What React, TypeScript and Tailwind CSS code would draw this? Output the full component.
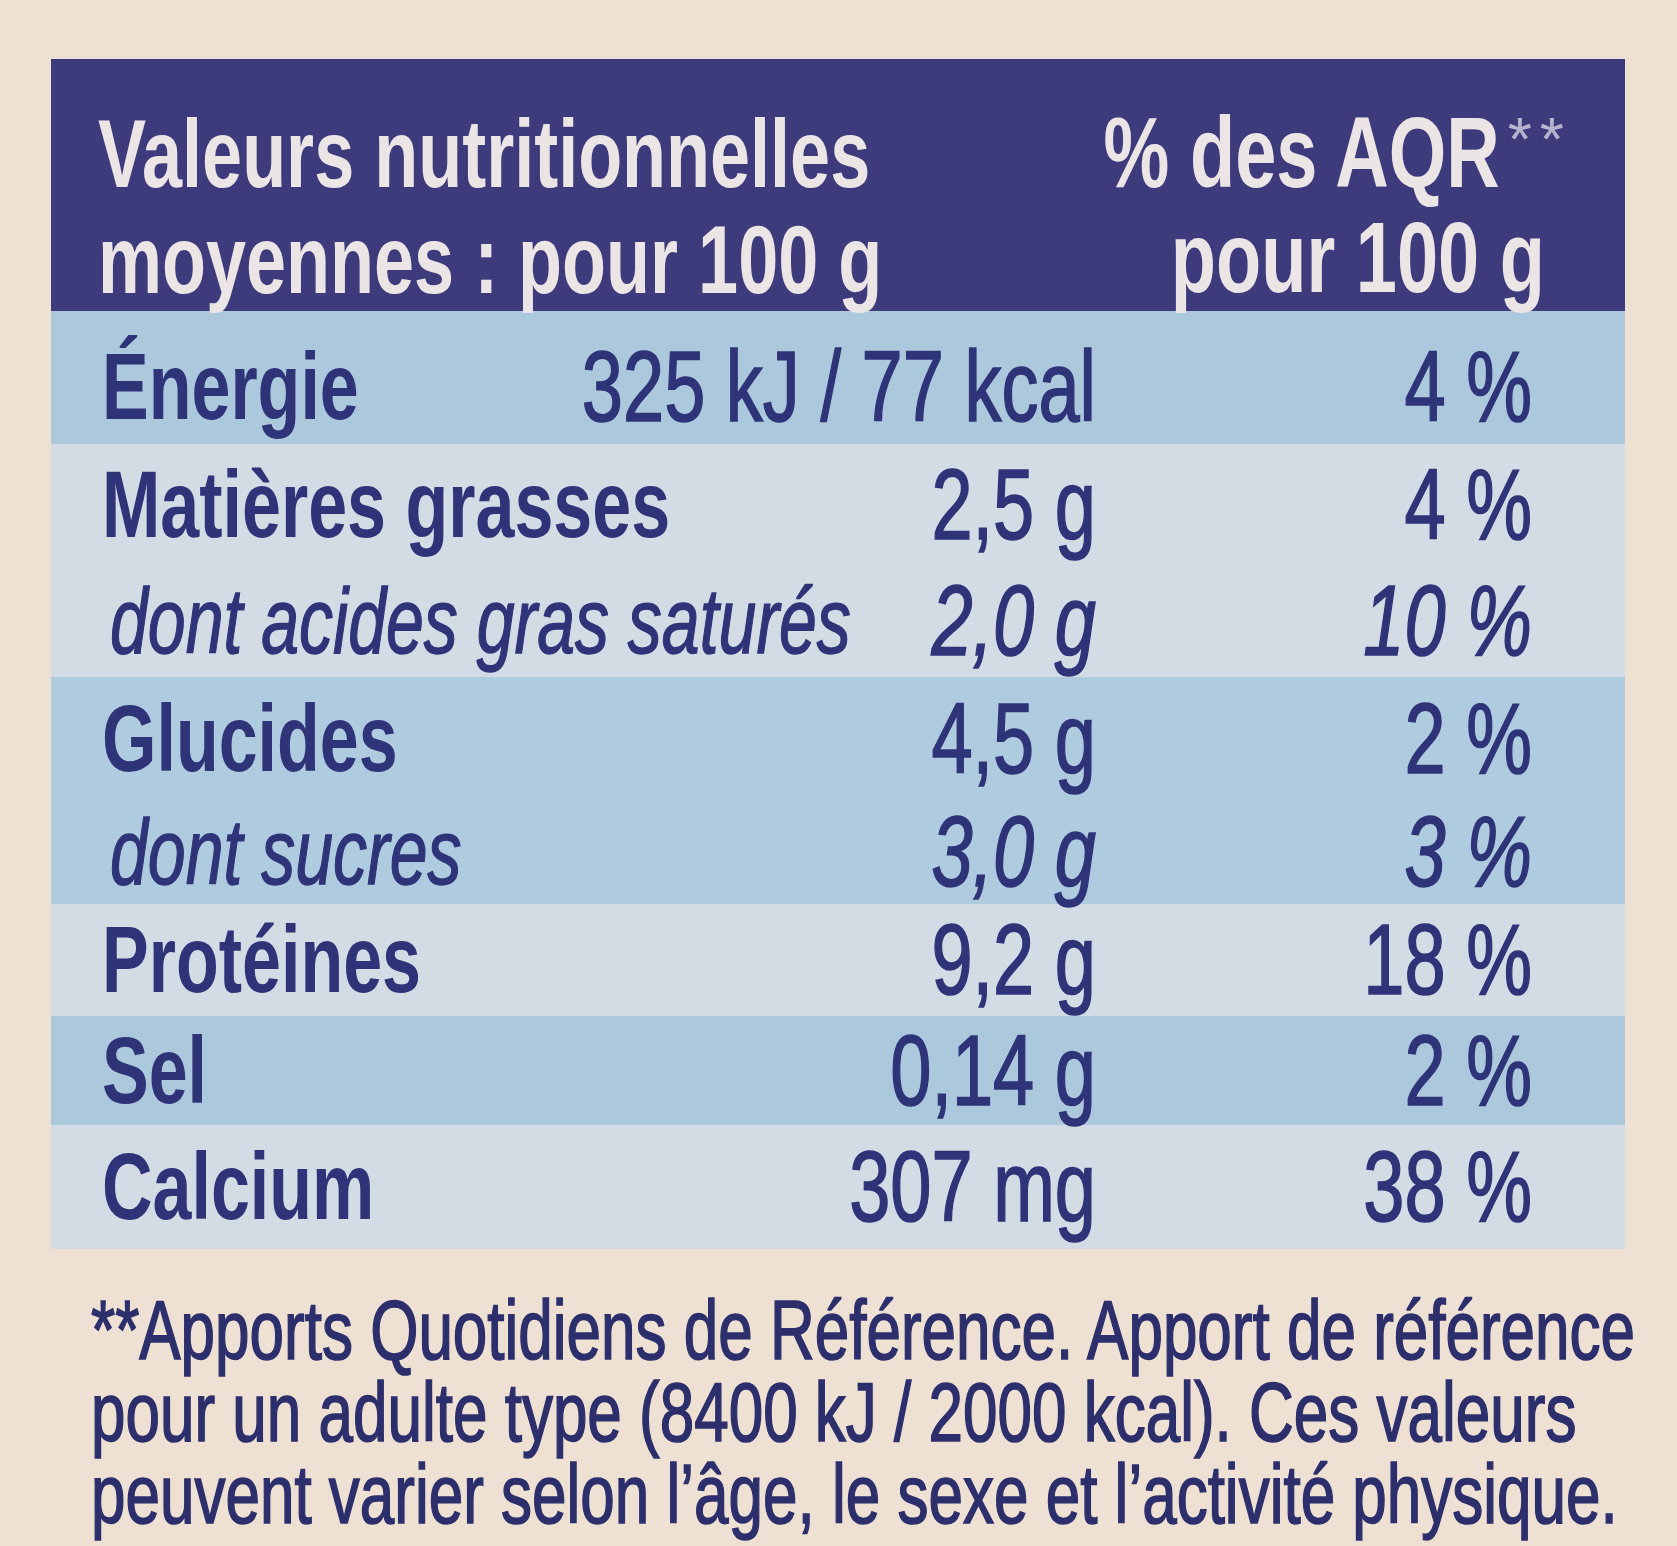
const rows = [
  { label: 'Énergie', value: '325 kJ / 77 kcal', pct: '4 %', bg: 'bg-[#abc8dc]', h: 'h-[133px] pt-[18px]' },
  { label: 'Matières grasses', value: '2,5 g', pct: '4 %', bg: 'bg-[#d3dce5]', h: 'h-[121px]' },
  { label: 'dont acides gras saturés', value: '2,0 g', pct: '10 %', bg: 'bg-[#d3dce5]', h: 'h-[112px]', sub: true },
  { label: 'Glucides', value: '4,5 g', pct: '2 %', bg: 'bg-[#afcbdf]', h: 'h-[123px]' },
  { label: 'dont sucres', value: '3,0 g', pct: '3 %', bg: 'bg-[#afcbdf]', h: 'h-[104px]', sub: true },
  { label: 'Protéines', value: '9,2 g', pct: '18 %', bg: 'bg-[#d3dce5]', h: 'h-[112px]' },
  { label: 'Sel', value: '0,14 g', pct: '2 %', bg: 'bg-[#abc8dc]', h: 'h-[109px]' },
  { label: 'Calcium', value: '307 mg', pct: '38 %', bg: 'bg-[#d3dce5]', h: 'h-[124px]' },
];

const Tall = ({ children, className = '' }: { children: React.ReactNode; className?: string }) => (
  <span className={`inline-block origin-center scale-y-[1.35] whitespace-pre ${className}`}>{children}</span>
);

export default function App() {
  return (
    <div className="min-h-screen w-full bg-[#eee1d3] pt-[59px] font-['Liberation_Sans',Arial,sans-serif]">
      <div className="ml-[51px] w-[1574px]">
        {/* En-tête */}
        <div className="flex h-[252px] justify-between bg-[#3e3b7c] pt-[41px] font-bold text-[#ebe5e6]">
          <div className="pl-[47px] text-[72px] leading-none">
            <div className="flex h-[106px] items-center">
              <Tall>Valeurs nutritionnelles</Tall>
            </div>
            <div className="flex h-[106px] items-center">
              <Tall>moyennes : pour 100 g</Tall>
            </div>
          </div>
          <div className="flex flex-col items-end pr-[53px] text-[74px] leading-none">
            <div className="flex h-[106px] items-center">
              <Tall>% des AQR</Tall>
              <span className="ml-[8px] -mt-[28px] text-[62px] font-normal tracking-[8px] text-[#b9b3cf]">**</span>
            </div>
            <div className="mr-[27px] flex h-[106px] items-center">
              <Tall>pour 100 g</Tall>
            </div>
          </div>
        </div>

        {/* Lignes */}
        {rows.map((r) => (
          <div key={r.label} className={`flex items-center pl-[51px] pr-[93px] leading-none text-[#2f3479] ${r.bg} ${r.h}`}>
            <div className="flex flex-1 items-center justify-between">
              {r.sub ? (
                <Tall className="pl-[8px] text-[68px] italic [-webkit-text-stroke:1px_currentColor]">{r.label}</Tall>
              ) : (
                <Tall className="text-[70px] font-bold">{r.label}</Tall>
              )}
              <Tall className={`text-[74px] [-webkit-text-stroke:1.2px_currentColor] ${r.sub ? 'italic' : ''}`}>{r.value}</Tall>
            </div>
            <div className="w-[436px] text-right">
              <Tall className={`text-[74px] [-webkit-text-stroke:1.2px_currentColor] ${r.sub ? 'italic' : ''}`}>{r.pct}</Tall>
            </div>
          </div>
        ))}
      </div>

      {/* Note */}
      <div className="mt-[41px] pl-[91px] text-[62px] leading-[82px] text-[#2c2f6c] [-webkit-text-stroke:1.2px_currentColor]">
        <div><Tall className="scale-y-[1.1]">**Apports Quotidiens de Référence. Apport de référence</Tall></div>
        <div><Tall className="scale-y-[1.1]">pour un adulte type (8400 kJ / 2000 kcal). Ces valeurs</Tall></div>
        <div><Tall className="scale-y-[1.1]">peuvent varier selon l’âge, le sexe et l’activité physique.</Tall></div>
      </div>
    </div>
  );
}
